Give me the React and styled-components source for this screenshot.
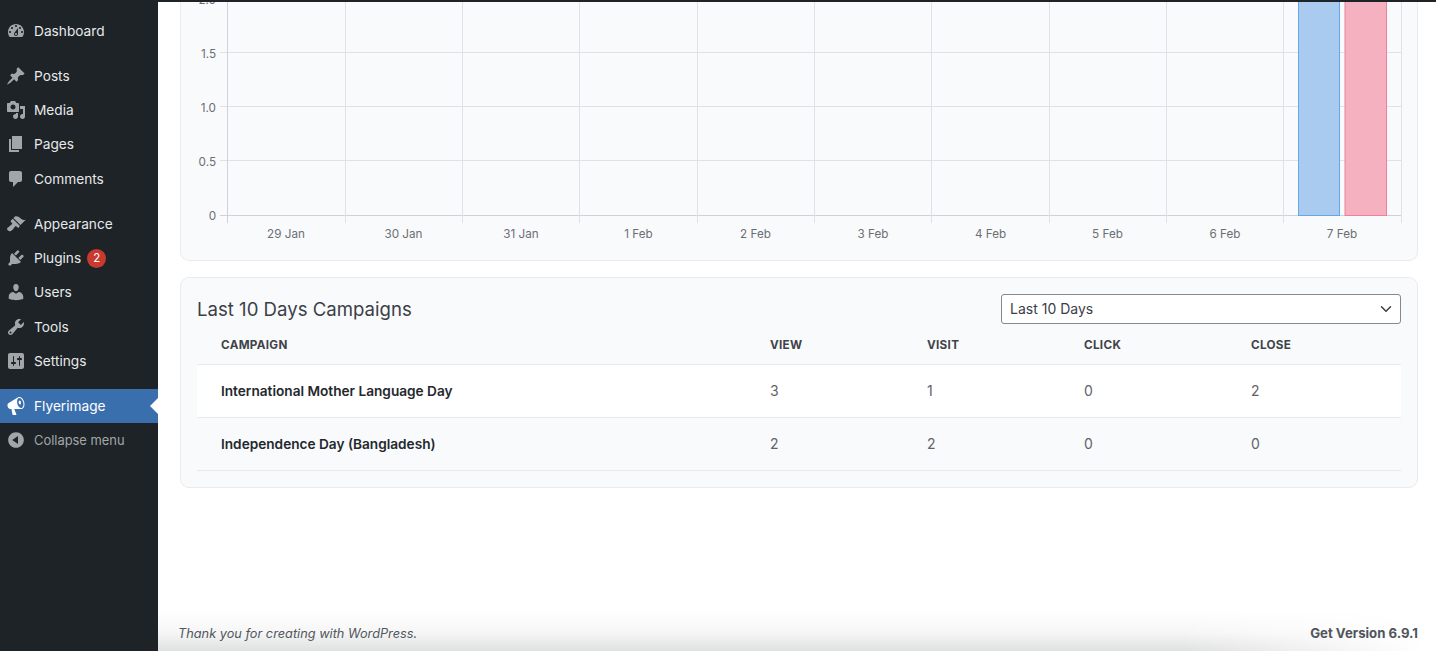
import React from "react";
import styled, { createGlobalStyle } from "styled-components";
import { ChevronDown } from "lucide-react";

const Global = createGlobalStyle`
  html, body { margin: 0; padding: 0; background: #fff; }
  #root { width: 1436px; height: 651px; overflow: hidden; }
  * { box-sizing: border-box; }
`;

const Page = styled.div`
  width: 1436px;
  height: 651px;
  display: flex;
  overflow: hidden;
  font-family: Inter, "Liberation Sans", sans-serif;
  background: #fff;
  position: relative;
  border-top: 2px solid #1d2327;
`;

const Sidebar = styled.nav`
  width: 158px;
  flex: none;
  background: #1d2327;
  padding-top: 11.5px;
  display: flex;
  flex-direction: column;
`;

const MenuGroup = styled.div`
  display: flex;
  flex-direction: column;
  margin-bottom: 11px;
`;

const MenuItem = styled.div`
  height: 34.25px;
  display: flex;
  align-items: center;
  gap: 8px;
  padding-left: 6px;
  font-size: ${(p) => (p.$muted ? "12.9px" : "13.7px")};
  position: relative;
  color: ${(p) => (p.$active ? "#fff" : p.$muted ? "#a3a6a9" : "#e7e9ea")};
  background: ${(p) => (p.$active ? "#3a6fae" : "transparent")};
  ${(p) =>
    p.$active
      ? `&::after {
    content: "";
    position: absolute;
    right: 0;
    top: 50%;
    margin-top: -8px;
    border: 8px solid transparent;
    border-right-color: #fff;
    border-left-width: 0;
  }`
      : ""}
`;

const MenuIcon = styled.svg`
  width: 20px;
  height: 20px;
  flex: none;
  fill: ${(p) => (p.$active ? "#fff" : "#a3a6a9")};
`;

const Badge = styled.span`
  width: 19px;
  height: 19px;
  border-radius: 50%;
  background: #c9392f;
  color: #fff;
  font-size: 11.5px;
  display: flex;
  align-items: center;
  justify-content: center;
  margin-left: -2px;
`;

const Main = styled.main`
  flex: 1;
  min-width: 0;
  display: flex;
  flex-direction: column;
  padding: 0 18px 0 22px;
  gap: 16px;
  position: relative;
`;

const ChartCard = styled.section`
  height: 259px;
  flex: none;
  background: #f9fafc;
  border: 1px solid #e9ebee;
  border-top: none;
  border-radius: 0 0 9px 9px;
  overflow: hidden;
`;

const ChartSvg = styled.svg`
  display: block;
  width: 1236px;
  height: 258px;
  font-family: Inter, "Liberation Sans", sans-serif;
  font-size: 11.7px;
`;

const TableCard = styled.section`
  height: 211px;
  flex: none;
  background: #f9fafc;
  border: 1px solid #e9ebee;
  border-radius: 9px;
  padding: 16px;
`;

const CardHead = styled.header`
  display: flex;
  justify-content: space-between;
  align-items: center;
  height: 30px;
`;

const Title = styled.h2`
  margin: 0;
  font-size: 18.6px;
  font-weight: 400;
  color: #3c4046;
`;

const Select = styled.div`
  width: 400px;
  height: 30px;
  background: #fff;
  border: 1px solid #85888e;
  border-radius: 3px;
  padding: 0 5px 1px 8px;
  display: flex;
  align-items: center;
  justify-content: space-between;
  font-size: 14px;
  color: #3c4046;
`;

const Row = styled.div`
  display: grid;
  grid-template-columns: 549px 157px 157px 167px 150px;
  align-items: center;
  padding-left: 24px;
  padding-top: ${(p) => (p.$head ? "2px" : "0")};
  padding-bottom: ${(p) => (p.$head ? "0" : "2px")};
  height: ${(p) => (p.$head ? "41px" : "53px")};
  background: ${(p) => (p.$white ? "#fff" : "transparent")};
  border-bottom: 1px solid #e7e9ec;
  font-size: 14px;
  color: #5f6369;
`;

const HeadCell = styled.div`
  font-size: 11.7px;
  font-weight: 700;
  letter-spacing: 0.3px;
  color: #3f4349;
`;

const NameCell = styled.div`
  font-weight: 600;
  font-size: 13.65px;
  padding-top: 2px;
  color: #24282d;
`;

const Footer = styled.footer`
  margin-top: auto;
  height: 41px;
  padding: 4px 0 0;
  display: flex;
  justify-content: space-between;
  align-items: center;
  font-size: 13px;
  color: #50575e;
  position: relative;
  z-index: 0;
  &::before {
    content: "";
    position: absolute;
    left: -22px;
    right: -18px;
    top: 0;
    bottom: 0;
    z-index: -1;
    background: linear-gradient(to top, #dfe0e1, #f6f6f6 45%, #ffffff);
    -webkit-mask-image: linear-gradient(to right, #000 80%, transparent 99%);
    mask-image: linear-gradient(to right, #000 80%, transparent 99%);
  }
`;

const Thanks = styled.em`
  font-style: italic;
  font-size: 12.75px;
  margin-left: -2px;
  padding-top: 1px;
`;

const Version = styled.strong`
  font-weight: 700;
  font-size: 13.2px;
  color: #50555c;
`;

const paths = {
  dashboard:
    "M3.76 16h12.48c1.1-1.37 1.76-3.11 1.76-5 0-4.42-3.58-8-8-8s-8 3.58-8 8c0 1.89.66 3.63 1.76 5zM10 4c.55 0 1 .45 1 1s-.45 1-1 1-1-.45-1-1 .45-1 1-1zM6 6c.55 0 1 .45 1 1s-.45 1-1 1-1-.45-1-1 .45-1 1-1zm8 0c.55 0 1 .45 1 1s-.45 1-1 1-1-.45-1-1 .45-1 1-1zm-5.37 5.55L12 7v6c0 1.1-.9 2-2 2s-2-.9-2-2c0-.57.24-1.08.63-1.45zM4 10c.55 0 1 .45 1 1s-.45 1-1 1-1-.45-1-1 .45-1 1-1zm12 0c.55 0 1 .45 1 1s-.45 1-1 1-1-.45-1-1 .45-1 1-1zm-5 3c0-.55-.45-1-1-1s-1 .45-1 1 .45 1 1 1 1-.45 1-1z",
  posts:
    "M10.44 3.02l1.82-1.82 6.36 6.35-1.83 1.82c-1.05-.68-2.48-.57-3.41.36l-.75.75c-.92.93-1.04 2.35-.35 3.41l-1.83 1.82-2.41-2.41-2.8 2.79c-.42.42-3.38 2.71-3.8 2.29s1.86-3.39 2.28-3.81l2.79-2.79L4.1 9.36l1.83-1.82c1.05.69 2.48.57 3.4-.36l.75-.75c.93-.92 1.05-2.35.36-3.41z",
  media:
    "M13 11V4c0-.55-.45-1-1-1h-1.67L9 1H5L3.67 3H2c-.55 0-1 .45-1 1v7c0 .55.45 1 1 1h10c.55 0 1-.45 1-1zM7 4.5c1.38 0 2.5 1.12 2.5 2.5S8.38 9.5 7 9.5 4.5 8.38 4.5 7 5.62 4.5 7 4.5zM14 6h5v10.5c0 1.38-1.12 2.5-2.5 2.5S14 17.88 14 16.5s1.12-2.5 2.5-2.5c.17 0 .34.02.5.05V9h-3V6zm-4 8.05V13h2v3.5c0 1.38-1.12 2.5-2.5 2.5S7 17.88 7 16.5 8.12 14 9.5 14c.17 0 .34.02.5.05z",
  pages: "M6 15V2h10v13H6zm-1 1h8v2H3V5h2v11z",
  comments:
    "M5 2h9c1.1 0 2 .9 2 2v7c0 1.1-.9 2-2 2h-2l-5 5v-5H5c-1.1 0-2-.9-2-2V4c0-1.1.9-2 2-2z",
  appearance:
    "M14.48 11.06L7.41 3.99l1.5-1.5c.5-.56 2.3-.47 3.51.32 1.21.8 1.43 1.28 2.91 2.1 1.18.64 2.45 1.26 4.45.85zm-.71.71L6.7 4.7 4.93 6.47c-.39.39-.39 1.02 0 1.41l1.06 1.06c.39.39.39 1.03 0 1.42-.6.6-1.43 1.11-2.21 1.69-.35.26-.7.53-1.01.84C1.43 13.23.4 14.91 1.98 16.5c1.58 1.58 3.27.55 4.61-.79.31-.31.58-.66.84-1.01.58-.78 1.09-1.61 1.69-2.21.39-.39 1.02-.39 1.41 0l1.06 1.06c.39.39 1.02.39 1.41 0z",
  plugins:
    "M13.11 4.36L9.87 7.6 8 5.73l3.24-3.24c.35-.34 1.05-.2 1.56.32.52.51.66 1.21.31 1.55zm-8 1.77l.91-1.12 9.01 9.01-1.19.84c-.71.71-2.63 1.16-3.82 1.16H6.14L4.9 17.26c-.59.59-1.54.59-2.12 0-.59-.58-.59-1.53 0-2.12l1.24-1.24v-3.88c0-1.13.4-3.19 1.09-3.89zm7.26 3.97l3.24-3.24c.34-.35 1.04-.21 1.55.31.52.51.66 1.21.31 1.55l-3.24 3.25z",
  users:
    "M10 9.25c-2.27 0-2.73-3.44-2.73-3.44C7 4.02 7.82 2 9.97 2c2.16 0 2.98 2.02 2.71 3.81 0 0-.41 3.44-2.68 3.44zm0 2.57L12.72 10c2.39 0 4.52 2.33 4.52 4.53v2.49s-3.65 1.13-7.24 1.13c-3.65 0-7.24-1.13-7.24-1.13v-2.49c0-2.25 1.94-4.48 4.47-4.48z",
  tools:
    "M16.68 9.77c-1.34 1.34-3.3 1.67-4.95.99l-5.41 6.52c-.99.99-2.59.99-3.58 0s-.99-2.59 0-3.57l6.52-5.42c-.68-1.65-.35-3.61.99-4.95 1.28-1.28 3.12-1.62 4.72-1.06l-2.89 2.89 2.82 2.82 2.86-2.87c.53 1.58.18 3.39-1.08 4.65zM3.81 16.21c.4.39 1.04.39 1.43 0 .4-.4.4-1.04 0-1.43-.39-.4-1.03-.4-1.43 0-.39.39-.39 1.03 0 1.43z",
  settings:
    "M18 16V4c0-1.1-.9-2-2-2H4c-1.1 0-2 .9-2 2v12c0 1.1.9 2 2 2h12c1.1 0 2-.9 2-2zM8 11h1c.55 0 1 .45 1 1s-.45 1-1 1H8v1.5c0 .28-.22.5-.5.5s-.5-.22-.5-.5V13H6c-.55 0-1-.45-1-1s.45-1 1-1h1V5.5c0-.28.22-.5.5-.5s.5.22.5.5V11zm5-2h-1c-.55 0-1-.45-1-1s.45-1 1-1h1V5.5c0-.28.22-.5.5-.5s.5.22.5.5V7h1c.55 0 1 .45 1 1s-.45 1-1 1h-1v5.5c0 .28-.22.5-.5.5s-.5-.22-.5-.5V9z",
  megaphone:
    "M18.15 5.94c.46 1.62.38 3.22-.02 4.48-.42 1.28-1.26 2.18-2.3 2.48-.16.06-.26.06-.4.06-.06.02-.12.02-.18.02-.06.02-.14.02-.22.02h-6.8l2.22 5.5c.02.14-.06.26-.14.34-.08.1-.24.16-.34.16H6.95c-.1 0-.26-.06-.34-.16-.08-.08-.16-.2-.14-.34l-1-5.5H4.25l-.02-.02c-.5.06-1.08-.18-1.54-.62s-.88-1.08-1.06-1.88c-.24-.8-.2-1.56-.02-2.2.18-.62.58-1.08 1.06-1.3l.02-.02 9-5.4c.1-.06.18-.1.24-.16.06-.04.14-.08.24-.12.16-.08.28-.12.5-.18 1.04-.3 2.24.1 3.22.98s1.8 2.18 2.26 3.86zm-2.58 5.98h-.02c.4-.1.74-.34 1.04-.7.58-.7.86-1.76.86-3.04 0-.64-.1-1.3-.28-1.98-.34-1.36-1.02-2.5-1.78-3.24s-1.68-1.1-2.46-.88c-.82.22-1.38.96-1.68 2.04-.3 1.06-.3 2.4.08 3.76.36 1.36 1.04 2.5 1.78 3.24.78.74 1.62 1.1 2.46.8zm-.71-5.94c.18.64.18 1.28.06 1.84-.04.22-.14.38-.26.5-.06.08-.12.14-.2.18-.34.12-.68 0-.98-.26-.3-.26-.6-.7-.76-1.26-.16-.56-.16-1.08-.02-1.5.12-.4.34-.7.68-.82.3-.1.66 0 1 .28.3.28.54.66.68 1.04z",
  collapse:
    "M10 2.16c4.33 0 7.84 3.51 7.84 7.84s-3.51 7.84-7.84 7.84S2.16 14.33 2.16 10 5.71 2.16 10 2.16zm2 11.72V6.12L6.18 9.97z",
};

const menuGroups = [
  [{ label: "Dashboard", icon: "dashboard" }],
  [
    { label: "Posts", icon: "posts" },
    { label: "Media", icon: "media" },
    { label: "Pages", icon: "pages" },
    { label: "Comments", icon: "comments" },
  ],
  [
    { label: "Appearance", icon: "appearance" },
    { label: "Plugins", icon: "plugins", badge: 2 },
    { label: "Users", icon: "users" },
    { label: "Tools", icon: "tools" },
    { label: "Settings", icon: "settings" },
  ],
  [
    { label: "Flyerimage", icon: "megaphone", active: true },
    { label: "Collapse menu", icon: "collapse", muted: true },
  ],
];

const gridX = [345, 462, 579, 697, 814, 931, 1049, 1166, 1283, 1401];
const gridY = [53, 107, 161];
const yLabels = [
  ["2.0", -1],
  ["1.5", 53],
  ["1.0", 107],
  ["0.5", 161],
  ["0", 215],
];
const xLabels = [
  ["29 Jan", 286],
  ["30 Jan", 403.5],
  ["31 Jan", 521],
  ["1 Feb", 638.5],
  ["2 Feb", 755.5],
  ["3 Feb", 873],
  ["4 Feb", 990.5],
  ["5 Feb", 1107.5],
  ["6 Feb", 1225],
  ["7 Feb", 1342],
];

function Chart() {
  return (
    <ChartSvg viewBox="181 2 1236 258">
      {gridY.map((y) => (
        <line key={y} x1="220" x2="1401" y1={y - 0.5} y2={y - 0.5} stroke="#e0e1e4" />
      ))}
      <line x1="220" x2="1401" y1="215.5" y2="215.5" stroke="#d0d1d4" />
      <line x1="227.5" x2="227.5" y1="0" y2="223" stroke="#d0d1d4" />
      {gridX.map((x) => (
        <line key={x} x1={x + 0.5} x2={x + 0.5} y1="0" y2="223" stroke="#e0e1e4" />
      ))}
      <rect x="1298.5" y="-2" width="41" height="217.5" fill="#a8cbef" stroke="#66a7ea" />
      <rect x="1345" y="-2" width="41.5" height="217.5" fill="#f5b1bf" stroke="#ee8098" />
      {yLabels.map(([t, y]) => (
        <text key={t} x="216" y={y + 4.5} textAnchor="end" fill="#6b6f73">
          {t}
        </text>
      ))}
      {xLabels.map(([t, x]) => (
        <text key={t} x={x} y="237.5" textAnchor="middle" fill="#6b6f73">
          {t}
        </text>
      ))}
    </ChartSvg>
  );
}

const rows = [
  ["International Mother Language Day", 3, 1, 0, 2],
  ["Independence Day (Bangladesh)", 2, 2, 0, 0],
];

export default function App() {
  return (
    <Page>
      <Global />
      <Sidebar>
        {menuGroups.map((group, i) => (
          <MenuGroup key={i}>
            {group.map((m) => (
              <MenuItem key={m.label} $active={m.active} $muted={m.muted}>
                <MenuIcon viewBox="0 0 20 20" $active={m.active}>
                  <path d={paths[m.icon]} />
                </MenuIcon>
                {m.label}
                {m.badge ? <Badge>{m.badge}</Badge> : null}
              </MenuItem>
            ))}
          </MenuGroup>
        ))}
      </Sidebar>
      <Main>
        <ChartCard>
          <Chart />
        </ChartCard>
        <TableCard>
          <CardHead>
            <Title>Last 10 Days Campaigns</Title>
            <Select>
              Last 10 Days
              <ChevronDown size={18} strokeWidth={2} color="#3c4046" />
            </Select>
          </CardHead>
          <Row $head>
            <HeadCell>CAMPAIGN</HeadCell>
            <HeadCell>VIEW</HeadCell>
            <HeadCell>VISIT</HeadCell>
            <HeadCell>CLICK</HeadCell>
            <HeadCell>CLOSE</HeadCell>
          </Row>
          {rows.map((r, i) => (
            <Row key={r[0]} $white={i === 0}>
              <NameCell>{r[0]}</NameCell>
              <div>{r[1]}</div>
              <div>{r[2]}</div>
              <div>{r[3]}</div>
              <div>{r[4]}</div>
            </Row>
          ))}
        </TableCard>
        <Footer>
          <Thanks>Thank you for creating with WordPress.</Thanks>
          <Version>Get Version 6.9.1</Version>
        </Footer>
      </Main>
    </Page>
  );
}
